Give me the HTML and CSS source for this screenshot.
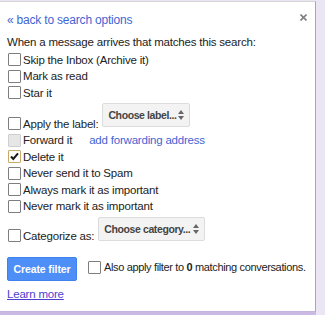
FILE: index.html
```html
<!DOCTYPE html>
<html lang="en">
<head>
  <meta charset="UTF-8" />
  <title>Create filter</title>
  <link rel="stylesheet" href="styles.css">
</head>
<body>

  <!-- Filter panel -->
  <div class="panel">
    <div class="top">
      <a class="back" href="#">&laquo; back to search options</a>
      <svg class="close" width="7" height="7" viewBox="0 0 7 7">
        <path d="M0.5 0.5L6.5 6.5M6.5 0.5L0.5 6.5" stroke="#808080" stroke-width="1.6" />
      </svg>
    </div>

    <div class="intro">When a message arrives that matches this search:</div>

    <div class="row"><span class="box"></span><span>Skip the Inbox (Archive it)</span></div>
    <div class="row"><span class="box"></span><span>Mark as read</span></div>
    <div class="row"><span class="box"></span><span>Star it</span></div>

    <div class="row row-select">
      <div class="row-text"><span class="box"></span><span>Apply the label:</span></div>
      <div class="select select-label"><span>Choose label...</span> <span class="arrows"></span></div>
    </div>

    <div class="row"><span class="box disabled"></span><span>Forward it</span> <a class="forward" href="#">add forwarding address</a></div>
    <div class="row"><span class="box checked">
      <svg width="11" height="11" viewBox="0 0 11 11"><path d="M2 5.5L4.3 8L9 2.3" fill="none" stroke="#1a1a1a" stroke-width="2" /></svg>
    </span><span>Delete it</span></div>
    <div class="row"><span class="box"></span><span>Never send it to Spam</span></div>
    <div class="row"><span class="box"></span><span>Always mark it as important</span></div>
    <div class="row"><span class="box"></span><span>Never mark it as important</span></div>

    <div class="row row-select row-cat">
      <div class="row-text"><span class="box"></span><span>Categorize as:</span></div>
      <div class="select select-cat"><span>Choose category...</span> <span class="arrows"></span></div>
    </div>

    <div class="actions">
      <button class="create">Create filter</button>
      <div class="also"><span class="box"></span><span>Also apply filter to <b>0</b> matching conversations.</span></div>
    </div>

    <a class="learn" href="#">Learn more</a>
  </div>

</body>
</html>
```

FILE: styles.css
```css
body {
  margin: 0;
  padding: 0;
  height: 315px;
  overflow: hidden;
  background: #ebe5f4;
  font-family: 'Liberation Sans', Arial, sans-serif;
  font-size: 11.5px;
  letter-spacing: -0.2px;
  color: #222;
}

/* Panel blanco */
.panel {
  width: 308px;
  height: 309px;
  padding: 0 0 0 7px;
  margin-top: 1px;
  background: white;
  border-top: 1px solid #d4d4d4;
  border-right: 1px solid #a9a4c4;
  border-bottom: 1px solid #c2b4de;
  box-shadow: 0 3px 0 #c9b9e3;
}

.top {
  display: flex;
  justify-content: space-between;
  align-items: center;
  height: 20px;
  padding-top: 8px;
  padding-right: 8px;
}

.back {
  color: #3f65d3;
  text-decoration: none;
  font-size: 12px;
}

.close {
  margin-top: -5px;
}

.intro {
  height: 16px;
  line-height: 16px;
  margin-top: 4px;
  margin-bottom: 1.5px;
}

.row {
  display: flex;
  align-items: center;
  height: 16.5px;
  line-height: 16px;
  white-space: nowrap;
}

.box {
  display: inline-flex;
  align-items: center;
  justify-content: center;
  width: 11px;
  height: 11px;
  border: 1px solid #7e7e7e;
  border-radius: 1px;
  background: white;
  margin: 0 2px 0 1px;
  flex-shrink: 0;
}

.box.disabled {
  background: #e6e6e6;
  border-color: #cfcfcf;
}

.box.checked {
  border-color: #c9a968;
}

.forward {
  color: #3f65d3;
  text-decoration: none;
  margin-left: 17px;
}

/* Filas con selector */
.row-select {
  height: auto;
  align-items: flex-end;
  padding-top: 2px;
}

.row-text {
  display: flex;
  align-items: center;
  height: 16.5px;
}

.select {
  box-sizing: border-box;
  display: flex;
  align-items: center;
  height: 24px;
  border: 1px solid #dcdcdc;
  border-radius: 2px;
  background: #f3f3f3;
  color: #444;
  font-weight: bold;
  font-size: 10.5px;
  letter-spacing: -0.4px;
  padding: 0 5px 0 5px;
  margin-bottom: 5px;
}

.select-label {
  margin-left: 4px;
  width: 88px;
}

.row-cat {
  padding-top: 2.5px;
}

.select-cat {
  margin-left: 4px;
  width: 107px;
  margin-bottom: 3px;
}

.arrows {
  margin-left: auto;
  width: 0;
  height: 0;
  position: relative;
  border-left: 3px solid transparent;
  border-right: 3px solid transparent;
  border-top: 4px solid #666;
  margin-top: 6px;
}

.arrows::before {
  content: '';
  position: absolute;
  left: -3px;
  top: -10px;
  border-left: 3px solid transparent;
  border-right: 3px solid transparent;
  border-bottom: 4px solid #666;
}

/* Botón y opción final */
.actions {
  display: flex;
  align-items: flex-start;
  margin-top: 13px;
}

.create {
  width: 70px;
  height: 24px;
  background: #4d8ef7;
  border: 1px solid #3f82ee;
  border-radius: 2px;
  color: white;
  font-family: inherit;
  font-weight: bold;
  font-size: 10.5px;
  letter-spacing: -0.1px;
  white-space: nowrap;
  padding: 0;
}

.also {
  display: flex;
  align-items: center;
  margin-left: 10px;
  margin-top: 2px;
  line-height: 16px;
  font-size: 11px;
  letter-spacing: -0.35px;
  white-space: nowrap;
}

.also .box {
  margin-right: 3px;
}

.learn {
  display: inline-block;
  margin-top: 5px;
  color: #4b3fd0;
  line-height: 16px;
}
```
